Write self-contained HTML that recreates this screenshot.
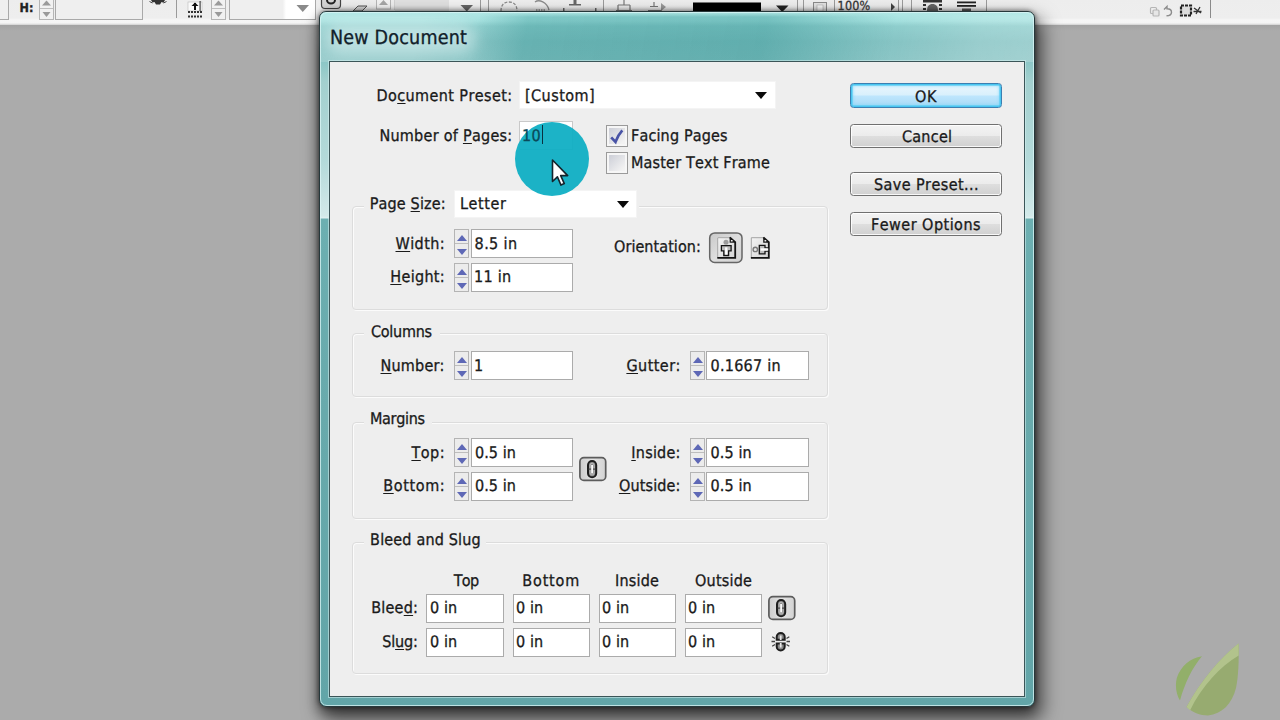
<!DOCTYPE html>
<html lang="en">
<head>
<meta charset="utf-8">
<title>New Document</title>
<style>
html,body{margin:0;padding:0}
body{width:1280px;height:720px;overflow:hidden;position:relative;background:#ababab;font-family:"DejaVu Sans Condensed","DejaVu Sans","Liberation Sans",sans-serif;font-stretch:condensed}
.a{position:absolute;box-sizing:border-box}
.t{position:absolute;white-space:pre;font-stretch:condensed;font-kerning:none;text-rendering:geometricPrecision;-webkit-text-stroke:.3px currentColor}
.t.top{z-index:5}
.t u{text-decoration:underline;text-underline-offset:2px;text-decoration-thickness:1px}
/* toolbar */
#tb{left:0;top:0;width:1280px;height:25px;background:linear-gradient(#ededed 0,#eeeeee 18px,#f6f6f6 20px,#f4f4f4 23px,#d0d0d0 25px)}
#tbsh{left:0;top:25px;width:1280px;height:6px;background:linear-gradient(#a2a2a2,#ababab)}
.tf{border:1px solid #a9a9a9;border-top:0;background:#efefef}
.tsp{border:1px solid #b5b5b5;border-top:0;background:#f1f1f1}
.vsep{width:1px;background:#9a9a9a}
/* dialog */
#shadow{left:319px;top:11px;width:716px;height:696px;border-radius:8px;box-shadow:5px 10px 18px 3px rgba(0,0,0,.55),-2px 6px 12px 0 rgba(0,0,0,.3),0 0 4px 1px rgba(0,0,0,.4)}
#frame{left:319px;top:11px;width:716px;height:696px;border-radius:7px;border:1px solid #26383b;overflow:hidden;
 background:linear-gradient(#b2e8e6 0,#a4e0de 9px,#8fcecd 14px,#86c4c4 30px,#8cc6c6 50px,#a3d0cf 70px,#b4dada 150px,#d2e9e9 204px,#dff0f0 206px,#6cafb1 207px,#68aaac 400px,#62a5a8 696px)}
#glass{left:0;top:0;width:714px;height:50px;background:linear-gradient(100deg,rgba(255,255,255,.14) 0,rgba(255,255,255,.14) 14%,rgba(255,255,255,0) 22%,rgba(30,135,135,.30) 29%,rgba(30,135,135,.36) 62%,rgba(255,255,255,.0) 80%,rgba(255,255,255,.16) 92%,rgba(255,255,255,.2) 100%);-webkit-mask-image:linear-gradient(transparent 0,#000 5px);mask-image:linear-gradient(transparent 0,#000 5px)}
#hl{left:0;top:0;width:714px;height:694px;border-radius:7px;border:1px solid rgba(220,245,245,.75)}
#client{left:329px;top:61px;width:696px;height:636px;background:#eeeeee;border:1px solid #3b5558;box-shadow:0 0 0 1px rgba(215,240,240,.55)}
#titleglow{left:326px;top:24px;width:150px;height:30px;border-radius:15px;background:rgba(225,245,245,.5);filter:blur(7px)}
/* group boxes */
.gb{border:1px solid #dcdcdc;border-radius:4px;box-shadow:1px 1px 0 #fbfbfb, inset 1px 1px 0 #fbfbfb}
.gl{background:#eeeeee;height:4px}
/* fields */
.f{background:#fff;border:1px solid #ababab}
.dd{background:#fff;border:1px solid #f4f4f4}
.sp{border:1px solid #b4b4b4;background:#ececec}
.sp:before{content:"";position:absolute;left:0;right:0;top:50%;height:1px;background:#bdbdbd;margin-top:-.5px}
.sp i{position:absolute;left:50%;margin-left:-5px;width:0;height:0;border-left:5px solid transparent;border-right:5px solid transparent}
.sp i.u{top:4.5px;border-bottom:6px solid #5e68b6}
.sp i.d{bottom:2.5px;border-top:6px solid #5e68b6}
.arr{width:0;height:0;border-left:6.5px solid transparent;border-right:6.5px solid transparent;border-top:7px solid #0a0a0a}
/* buttons */
.btn{border:1px solid #707070;border-radius:3.5px;background:linear-gradient(#f3f3f3 0,#ececec 48%,#dedede 52%,#d0d0d0 100%);box-shadow:inset 0 0 0 1px rgba(255,255,255,.85)}
.btn.def{border-color:#3c7fb1;background:linear-gradient(#eaf6fd 0,#d9f0fc 48%,#bee6fd 52%,#a7d9f5 100%);box-shadow:inset 0 0 0 1.5px #48c6f0,inset 0 0 3px 2px rgba(120,215,250,.8)}
.cb{border:1.500px solid #9a9a9a;background:linear-gradient(135deg,#cfd1d9 15%,#f2f2f2 80%);box-shadow:inset 0 0 0 2px #f6f6f6}
.ib{border:1px solid #555;border-radius:5px;background:linear-gradient(#d9d9d9,#c6c6c6);box-shadow:inset 0 0 0 1px #efefef}
</style>
</head>
<body>
<!-- top control strip -->
<div class="a" id="tb"></div>
<div class="a" id="tbsh"></div>
<div class="a tf" style="left:-2px;top:0;width:11px;height:20px"></div>
<div class="a tsp" style="left:39px;top:0;width:15px;height:20px"></div>
<div class="a" style="left:40px;top:8px;width:13px;height:1px;background:#bdbdbd"></div>
<div class="a tf" style="left:55px;top:0;width:88px;height:20px"></div>
<div class="a vsep" style="left:176px;top:0;height:18px"></div>
<div class="a tsp" style="left:211px;top:0;width:15px;height:20px"></div>
<div class="a" style="left:212px;top:8px;width:13px;height:1px;background:#bdbdbd"></div>
<div class="a tf" style="left:229px;top:0;width:87px;height:20px;background:linear-gradient(90deg,#efefef 0,#efefef 62%,#fff 66%)"></div>
<svg class="a" style="left:0;top:0" width="1280" height="26" viewBox="0 0 1280 26">
 <g fill="#9a9a9a">
  <path d="M42 5.5h9l-4.5-5z"/><path d="M42.5 12h8l-4 5z"/>
  <path d="M214 5.5h9l-4.5-5z"/><path d="M214.500 12h8l-4 5z"/>
  <path d="M296.500 5h12.500l-6.250 7z" fill="#8a8a8a"/>
 </g>
 <!-- small glyph icons -->
 <path d="M151 0l1.500 2.500 2-.5 1.500 2.500h4l1.500-2.500 2 .8 1.500-2.800z" fill="#333"/><path d="M149.500 1.500l3 1.500M166.500 1.500l-3 1.500" stroke="#444" stroke-width="1"/>
 <g fill="#111"><rect x="188" y="2" width="14" height="9" fill="#fafafa" stroke="#bbb" stroke-width=".6"/><rect x="194" y="3" width="2" height="7"/><path d="M191.500 6l3.500-3.500 3.500 3.500z"/><rect x="199.500" y="1" width="1.200" height="10" fill="#444"/>
  <g fill="#333"><rect x="188" y="11" width="2" height="2"/><rect x="191" y="11" width="2" height="2"/><rect x="194" y="11" width="2" height="2"/><rect x="197" y="11" width="2" height="2"/><rect x="200" y="11" width="2" height="2"/>
  <rect x="188" y="15.500" width="2" height="2"/><rect x="191" y="15.500" width="2" height="2"/><rect x="194" y="15.500" width="2" height="2"/><rect x="197" y="15.500" width="2" height="2"/><rect x="200" y="15.500" width="2" height="2"/></g></g>
 <!-- strip behind dialog top -->
 <rect x="321.500" y="-4" width="19" height="12.500" rx="3.500" fill="#d4d4d4" stroke="#444" stroke-width="1.200"/>
 <path d="M327 0a4 3.500 0 0 0 8 0" fill="none" stroke="#222" stroke-width="2"/>
 <path d="M353 11l5-5h9l-5 5z" fill="#d8d8d8" stroke="#555" stroke-width="1"/>
 <rect x="376.500" y="-2" width="14" height="11" fill="#f1f1f1" stroke="#b5b5b5"/><path d="M379 5h9l-4.500-5z" fill="#a5a5a5"/>
 <rect x="394.500" y="-2" width="1" height="12" fill="#b5b5b5"/>
 <rect x="395" y="0" width="54" height="11" fill="#e0e0e0"/><rect x="449" y="0" width="31" height="11" fill="#f1f1f1"/><path d="M460.500 5h12.500l-6.250 6.500z" fill="#666"/>
 <rect x="480" y="0" width="1" height="11" fill="#9a9a9a"/><rect x="488" y="0" width="1" height="11" fill="#9a9a9a"/>
 <g fill="none" stroke="#8a8a8a" stroke-width="1.300"><path d="M501 11c0-6 3-9 8-9s8 3 8 9" stroke-dasharray="3 1.500"/><path d="M535 2c4-3 12 0 14 8"/><path d="M536 10h9" stroke-dasharray="1.500 1"/></g>
 <g fill="#666"><rect x="573.500" y="0" width="3" height="4.500"/><rect x="569" y="4" width="12" height="1.500"/><rect x="563" y="8" width="1.500" height="3"/><rect x="595" y="8" width="1.500" height="3"/></g>
 <rect x="603" y="0" width="1" height="11" fill="#9a9a9a"/>
 <g fill="none" stroke="#777" stroke-width="1.200"><path d="M624 0v5M618 5h12M618 5v6M630 5v6M616 10.500h16"/><path d="M654 2v4M650 6.500h8M648 10.500h14"/></g>
 <path d="M661 3l5 4-5 4z" fill="#999"/>
 <rect x="693" y="2.500" width="68" height="9" fill="#000"/>
 <path d="M776 5.500h12.500l-6.250 6.500z" fill="#222"/>
 <rect x="797" y="0" width="1" height="11" fill="#9a9a9a"/><rect x="803" y="0" width="1" height="11" fill="#9a9a9a"/>
 <rect x="813.500" y="2.500" width="13" height="10" fill="#e2e2e2" stroke="#8a8a8a"/><rect x="817" y="5" width="6" height="6" fill="#f8f8f8" stroke="#aaa" stroke-width=".6"/>
 <rect x="834" y="0" width="1" height="11" fill="#9a9a9a"/>
 <path d="M891 3l4 4-4 4z" fill="#444"/>
 <rect x="898" y="0" width="1" height="11" fill="#9a9a9a"/><rect x="902" y="0" width="1" height="11" fill="#9a9a9a"/><rect x="911" y="0" width="1" height="11" fill="#9a9a9a"/>
 <g fill="#333"><rect x="923" y="0" width="19" height="2.500"/><rect x="923" y="4" width="3" height="2"/><rect x="939" y="4" width="3" height="2"/><rect x="923" y="8" width="3" height="2"/><rect x="939" y="8" width="3" height="2"/><path d="M927 11c0-5 2-7 5.500-7s5.500 2 5.500 7z" fill="#666"/></g>
 <g fill="#222"><rect x="957" y="1.500" width="19" height="1.800"/><rect x="957" y="5" width="19" height="1.800"/><rect x="962" y="8.500" width="9" height="3" fill="#555"/></g>
 <rect x="986" y="0" width="1" height="11" fill="#9a9a9a"/>
 <!-- right side small icons -->
 <g fill="none" stroke="#b5b5b5" stroke-width="1.200"><rect x="1150.500" y="7.500" width="6" height="6" rx="1"/><rect x="1153" y="10" width="6" height="6" rx="1" fill="#e6e6e6"/></g>
 <path d="M1164 9.500l3-3v2.200c3 0 4.500 1.500 4.500 3.500s-2 3.500-5 3.500" fill="none" stroke="#8c8c8c" stroke-width="1.400"/>
 <rect x="1181" y="5.500" width="10" height="10" fill="#dcdcdc" stroke="#222" stroke-width="2.200" stroke-dasharray="3 1"/>
 <path d="M1194 8l7 5M1200 7l-4 7M1193.500 11.500h8" stroke="#333" stroke-width="1.300" fill="none"/>
 <rect x="1210" y="0" width="1" height="18" fill="#8a8a8a"/>
</svg>

<!-- dialog -->
<div class="a" id="shadow"></div>
<div class="a" id="frame"><div class="a" id="glass"></div><div class="a" id="hl"></div></div>
<div class="a" id="titleglow"></div>
<div class="a" id="client"></div>

<!-- group boxes -->
<div class="a gb" style="left:352px;top:206px;width:475.500px;height:103.500px"></div>
<div class="a gl" style="left:364px;top:204px;width:275px"></div>
<div class="a gb" style="left:352px;top:332.500px;width:475.500px;height:64.500px"></div>
<div class="a gl" style="left:364px;top:330.500px;width:76px"></div>
<div class="a gb" style="left:352px;top:421.500px;width:475.500px;height:97px"></div>
<div class="a gl" style="left:364px;top:419.500px;width:68px"></div>
<div class="a gb" style="left:352px;top:542px;width:475.500px;height:131.500px"></div>
<div class="a gl" style="left:364px;top:540px;width:122px"></div>

<!-- dropdowns -->
<div class="a dd" style="left:519px;top:81px;width:257px;height:28px"></div>
<div class="a arr" style="left:755px;top:92px"></div>
<div class="a dd" style="left:454px;top:190px;width:183px;height:28px"></div>
<div class="a arr" style="left:616.500px;top:200.500px"></div>

<!-- pages field -->
<div class="a f" style="left:519px;top:121px;width:54px;height:29px;border-color:#c9c9c9"></div>

<!-- checkboxes -->
<div class="a cb" style="left:606px;top:125.300px;width:22px;height:21.500px"></div>
<svg class="a" style="left:606px;top:125.300px" width="22" height="22" viewBox="0 0 22 22"><path d="M5.200 12.400l4.300 4.500c1.600-4.800 3.700-8.200 6.800-11.600" fill="none" stroke="#4853a6" stroke-width="2.700" stroke-linejoin="miter"/></svg>
<div class="a cb" style="left:606px;top:152.300px;width:22px;height:21.500px"></div>

<!-- spinner+field rows -->
<div class="a sp" style="left:454px;top:229px;width:15px;height:29px"><i class="u"></i><i class="d"></i></div>
<div class="a f" style="left:470.5px;top:229px;width:102.0px;height:29px"></div>
<div class="a sp" style="left:454px;top:263px;width:15px;height:29px"><i class="u"></i><i class="d"></i></div>
<div class="a f" style="left:470.5px;top:263px;width:102.0px;height:29px"></div>
<div class="a sp" style="left:454px;top:351px;width:15px;height:29px"><i class="u"></i><i class="d"></i></div>
<div class="a f" style="left:470.5px;top:351px;width:102.0px;height:29px"></div>
<div class="a sp" style="left:454px;top:438px;width:15px;height:29px"><i class="u"></i><i class="d"></i></div>
<div class="a f" style="left:470.5px;top:438px;width:102.0px;height:29px"></div>
<div class="a sp" style="left:454px;top:472px;width:15px;height:29px"><i class="u"></i><i class="d"></i></div>
<div class="a f" style="left:470.5px;top:472px;width:102.0px;height:29px"></div>
<div class="a sp" style="left:690px;top:351px;width:15px;height:29px"><i class="u"></i><i class="d"></i></div>
<div class="a f" style="left:706px;top:351px;width:102.5px;height:29px"></div>
<div class="a sp" style="left:690px;top:438px;width:15px;height:29px"><i class="u"></i><i class="d"></i></div>
<div class="a f" style="left:706px;top:438px;width:102.5px;height:29px"></div>
<div class="a sp" style="left:690px;top:472px;width:15px;height:29px"><i class="u"></i><i class="d"></i></div>
<div class="a f" style="left:706px;top:472px;width:102.5px;height:29px"></div>
<div class="a f" style="left:426px;top:593.5px;width:77.5px;height:29px"></div>
<div class="a f" style="left:512.5px;top:593.5px;width:77.0px;height:29px"></div>
<div class="a f" style="left:598.5px;top:593.5px;width:77.0px;height:29px"></div>
<div class="a f" style="left:684.5px;top:593.5px;width:77.5px;height:29px"></div>
<div class="a f" style="left:426px;top:627.5px;width:77.5px;height:29px"></div>
<div class="a f" style="left:512.5px;top:627.5px;width:77.0px;height:29px"></div>
<div class="a f" style="left:598.5px;top:627.5px;width:77.0px;height:29px"></div>
<div class="a f" style="left:684.5px;top:627.5px;width:77.5px;height:29px"></div>

<!-- orientation -->
<svg class="a" style="left:700px;top:225px" width="80" height="45" viewBox="0 0 80 45">
 <defs><linearGradient id="gb1" x1="0" y1="0" x2="1" y2="1"><stop offset="0" stop-color="#c9c9c9"/><stop offset=".5" stop-color="#dedede"/><stop offset="1" stop-color="#d2d2d2"/></linearGradient>
 <linearGradient id="pg" x1="0" y1="0" x2="1" y2="1"><stop offset="0" stop-color="#f4f4f4"/><stop offset="1" stop-color="#d2d2d2"/></linearGradient></defs>
 <rect x="9.700" y="7.900" width="32.300" height="29.600" rx="5" fill="url(#gb1)" stroke="#666" stroke-width="1.500"/>
 <g id="pgicon">
  <path d="M17.200 12.200H30L36 17V33.750H17.200z" fill="url(#pg)"/>
  <path d="M17.700 33V12.700H30" fill="none" stroke="#a4a4a4" stroke-width="1"/>
  <path d="M29.800 12.300L35.200 17.200V32.900H17.300" fill="none" stroke="#141414" stroke-width="1.800"/>
  <path d="M29.600 12.300L35.800 17.800H29.600z" fill="#1c1c1c"/>
  <rect x="30.900" y="15" width="1.700" height="1.500" fill="#f0f0f0"/>
 </g>
 <circle cx="26" cy="17.300" r="2.500" fill="#9c9c9c"/>
 <path d="M21.400 20.700H31.100V25.800H28.600V30.500H23.800V25.800H21.400z" fill="#bdbdbd" stroke="#151515" stroke-width="1.300"/>
 <rect x="25.100" y="22.300" width="2.300" height="7.300" fill="#fff"/>
 <use href="#pgicon" x="33.600"/>
 <circle cx="55.300" cy="24.400" r="2.200" fill="#e6e6e6" stroke="#7a7a7a" stroke-width="1.400"/>
 <path d="M59.300 20.400H65V22.800H68V26.200H65V28.800H59.300z" fill="#bdbdbd" stroke="#151515" stroke-width="1.300"/>
 <rect x="60.600" y="23.300" width="7.600" height="2.400" fill="#fff"/>
</svg>

<!-- chain buttons -->
<svg class="a" style="left:570px;top:450px" width="46" height="40" viewBox="0 0 46 40">
 <defs><linearGradient id="gb2" x1="0" y1="0" x2="1" y2="0"><stop offset="0" stop-color="#cdcdcd"/><stop offset=".5" stop-color="#e4e4e4"/><stop offset="1" stop-color="#d2d2d2"/></linearGradient></defs>
 <g id="chainbtn">
  <rect x="9.900" y="7.700" width="25.800" height="22.700" rx="4" fill="url(#gb2)" stroke="#5c5c5c" stroke-width="1.700"/>
  <rect x="18" y="10.900" width="8.200" height="16.400" rx="4.100" fill="#8c8c8c" stroke="#1e1e1e" stroke-width="2"/>
  <rect x="20.100" y="13.200" width="4" height="11.800" rx="2" fill="none" stroke="#bdbdbd" stroke-width="1"/>
  <path d="M18 19.100h8.200" stroke="#333" stroke-width="1"/>
  <rect x="21.200" y="15" width="1.800" height="8.400" fill="#fafafa"/>
 </g>
</svg>
<svg class="a" style="left:759px;top:588.800px" width="46" height="40" viewBox="0 0 46 40"><use href="#chainbtn"/></svg>
<svg class="a" style="left:765px;top:627px" width="32" height="30" viewBox="0 0 32 30">
 <path d="M11.700 12.800V10a4 4 0 0 1 8 0v2.800z" fill="#8a8a8a" stroke="#1e1e1e" stroke-width="2"/>
 <path d="M11.700 16.400V19.400a4 4 0 0 0 8 0v-3z" fill="#8a8a8a" stroke="#1e1e1e" stroke-width="2"/>
 <rect x="14.800" y="8.500" width="1.800" height="4.500" fill="#e8e8e8"/><rect x="14.800" y="16" width="1.800" height="4.500" fill="#e8e8e8"/>
 <g stroke="#444" stroke-width="1.300"><path d="M6.500 14.500h3.500M21.500 14.500h3.500M7.200 9.800l2.800 1.700M24.300 9.800l-2.800 1.700M7.200 19.200l2.800-1.700M24.300 19.200l-2.800-1.700"/></g>
</svg>

<!-- buttons -->
<div class="a btn def" style="left:850px;top:83px;width:152px;height:25px"></div>
<div class="a btn" style="left:850px;top:124px;width:152px;height:24px"></div>
<div class="a btn" style="left:850px;top:171.500px;width:152px;height:24px"></div>
<div class="a btn" style="left:850px;top:212px;width:152px;height:24px"></div>

<!-- text -->
<span class="t " style="left:330.00px;top:25.55px;font-size:19.5px;line-height:24px;letter-spacing:0.195px;color:#10202a">New Document</span>
<span class="t " style="left:376.50px;top:85.76px;font-size:16px;line-height:20px;letter-spacing:0.413px;color:#1a1a1a">Do<u>c</u>ument Preset:</span>
<span class="t " style="left:525.00px;top:85.76px;font-size:16px;line-height:20px;letter-spacing:0.462px;color:#1a1a1a">[Custom]</span>
<span class="t " style="left:379.40px;top:125.76px;font-size:16px;line-height:20px;letter-spacing:0.271px;color:#1a1a1a">Number of <u>P</u>ages:</span>
<span class="t top" style="left:522.00px;top:125.76px;font-size:16px;line-height:20px;letter-spacing:0.344px;color:#0a4a5a">10</span>
<span class="t " style="left:631.00px;top:125.76px;font-size:16px;line-height:20px;letter-spacing:0.150px;color:#1a1a1a">Facing Pages</span>
<span class="t " style="left:631.00px;top:152.76px;font-size:16px;line-height:20px;letter-spacing:0.179px;color:#1a1a1a">Master Text Frame</span>
<span class="t " style="left:369.70px;top:193.76px;font-size:16px;line-height:20px;letter-spacing:0.164px;color:#1a1a1a">Page <u>S</u>ize:</span>
<span class="t " style="left:460.00px;top:193.76px;font-size:16px;line-height:20px;letter-spacing:0.597px;color:#1a1a1a">Letter</span>
<span class="t " style="left:395.50px;top:233.76px;font-size:16px;line-height:20px;letter-spacing:0.432px;color:#1a1a1a"><u>W</u>idth:</span>
<span class="t " style="left:474.60px;top:233.76px;font-size:16px;line-height:20px;letter-spacing:0.389px;color:#1a1a1a">8.5 in</span>
<span class="t " style="left:390.30px;top:266.76px;font-size:16px;line-height:20px;letter-spacing:0.318px;color:#1a1a1a"><u>H</u>eight:</span>
<span class="t " style="left:474.00px;top:266.76px;font-size:16px;line-height:20px;letter-spacing:0.279px;color:#1a1a1a">11 in</span>
<span class="t " style="left:614.00px;top:236.76px;font-size:16px;line-height:20px;letter-spacing:0.067px;color:#1a1a1a">Orientation:</span>
<span class="t " style="left:371.00px;top:321.76px;font-size:16px;line-height:20px;letter-spacing:-0.272px;color:#1a1a1a">Columns</span>
<span class="t " style="left:380.50px;top:355.76px;font-size:16px;line-height:20px;letter-spacing:0.212px;color:#1a1a1a"><u>N</u>umber:</span>
<span class="t " style="left:474.00px;top:355.76px;font-size:16px;line-height:20px;letter-spacing:0.000px;color:#1a1a1a">1</span>
<span class="t " style="left:626.40px;top:355.76px;font-size:16px;line-height:20px;letter-spacing:0.477px;color:#1a1a1a"><u>G</u>utter:</span>
<span class="t " style="left:710.50px;top:355.76px;font-size:16px;line-height:20px;letter-spacing:0.260px;color:#1a1a1a">0.1667 in</span>
<span class="t " style="left:370.00px;top:408.76px;font-size:16px;line-height:20px;letter-spacing:-0.320px;color:#1a1a1a">Margins</span>
<span class="t " style="left:411.40px;top:442.76px;font-size:16px;line-height:20px;letter-spacing:0.555px;color:#1a1a1a"><u>T</u>op:</span>
<span class="t " style="left:475.00px;top:442.76px;font-size:16px;line-height:20px;letter-spacing:0.069px;color:#1a1a1a">0.5 in</span>
<span class="t " style="left:383.20px;top:475.76px;font-size:16px;line-height:20px;letter-spacing:0.635px;color:#1a1a1a"><u>B</u>ottom:</span>
<span class="t " style="left:475.00px;top:475.76px;font-size:16px;line-height:20px;letter-spacing:0.069px;color:#1a1a1a">0.5 in</span>
<span class="t " style="left:631.30px;top:442.76px;font-size:16px;line-height:20px;letter-spacing:0.239px;color:#1a1a1a"><u>I</u>nside:</span>
<span class="t " style="left:710.50px;top:442.76px;font-size:16px;line-height:20px;letter-spacing:0.129px;color:#1a1a1a">0.5 in</span>
<span class="t " style="left:618.90px;top:475.76px;font-size:16px;line-height:20px;letter-spacing:0.158px;color:#1a1a1a"><u>O</u>utside:</span>
<span class="t " style="left:710.50px;top:475.76px;font-size:16px;line-height:20px;letter-spacing:0.129px;color:#1a1a1a">0.5 in</span>
<span class="t " style="left:370.10px;top:529.76px;font-size:16px;line-height:20px;letter-spacing:0.167px;color:#1a1a1a">Bleed and Slug</span>
<span class="t " style="left:453.70px;top:570.76px;font-size:16px;line-height:20px;letter-spacing:-0.697px;color:#1a1a1a">Top</span>
<span class="t " style="left:522.30px;top:570.76px;font-size:16px;line-height:20px;letter-spacing:0.827px;color:#1a1a1a">Bottom</span>
<span class="t " style="left:615.00px;top:570.76px;font-size:16px;line-height:20px;letter-spacing:0.198px;color:#1a1a1a">Inside</span>
<span class="t " style="left:695.00px;top:570.76px;font-size:16px;line-height:20px;letter-spacing:0.211px;color:#1a1a1a">Outside</span>
<span class="t " style="left:371.20px;top:597.76px;font-size:16px;line-height:20px;letter-spacing:0.233px;color:#1a1a1a">Blee<u>d</u>:</span>
<span class="t " style="left:382.20px;top:631.76px;font-size:16px;line-height:20px;letter-spacing:-0.127px;color:#1a1a1a">Sl<u>u</u>g:</span>
<span class="t " style="left:430.00px;top:597.76px;font-size:16px;line-height:20px;letter-spacing:0.091px;color:#1a1a1a">0 in</span>
<span class="t " style="left:516.00px;top:597.76px;font-size:16px;line-height:20px;letter-spacing:0.091px;color:#1a1a1a">0 in</span>
<span class="t " style="left:602.00px;top:597.76px;font-size:16px;line-height:20px;letter-spacing:0.091px;color:#1a1a1a">0 in</span>
<span class="t " style="left:688.00px;top:597.76px;font-size:16px;line-height:20px;letter-spacing:0.091px;color:#1a1a1a">0 in</span>
<span class="t " style="left:430.00px;top:631.76px;font-size:16px;line-height:20px;letter-spacing:0.091px;color:#1a1a1a">0 in</span>
<span class="t " style="left:516.00px;top:631.76px;font-size:16px;line-height:20px;letter-spacing:0.091px;color:#1a1a1a">0 in</span>
<span class="t " style="left:602.00px;top:631.76px;font-size:16px;line-height:20px;letter-spacing:0.091px;color:#1a1a1a">0 in</span>
<span class="t " style="left:688.00px;top:631.76px;font-size:16px;line-height:20px;letter-spacing:0.091px;color:#1a1a1a">0 in</span>
<span class="t " style="left:915.00px;top:86.76px;font-size:16px;line-height:20px;letter-spacing:0.672px;color:#1a1a1a">OK</span>
<span class="t " style="left:902.00px;top:126.76px;font-size:16px;line-height:20px;letter-spacing:0.245px;color:#1a1a1a">Cancel</span>
<span class="t " style="left:874.00px;top:174.76px;font-size:16px;line-height:20px;letter-spacing:0.423px;color:#1a1a1a">Save Preset...</span>
<span class="t " style="left:871.00px;top:214.76px;font-size:16px;line-height:20px;letter-spacing:0.475px;color:#1a1a1a">Fewer Options</span>
<span class="t " style="left:19.60px;top:-0.02px;font-size:12.5px;line-height:16px;letter-spacing:-0.012px;color:#222;font-weight:700">H:</span>
<span class="t " style="left:837.60px;top:-2.02px;font-size:12.5px;line-height:16px;letter-spacing:0.180px;color:#333">100%</span>

<!-- caret -->
<div class="a" style="left:541.800px;top:125px;width:1.300px;height:19px;background:#0a3040;z-index:5"></div>

<!-- click highlight + cursor -->
<div class="a" style="left:515px;top:122px;width:74px;height:74px;border-radius:50%;background:rgba(14,174,196,.94);z-index:3"></div>
<svg class="a" style="left:548px;top:156px;z-index:6" width="26" height="34" viewBox="0 0 26 34"><path d="M4.500 4v21.500l4.900-4.700 3.600 8.300 3.300-1.500-3.600-8h7z" fill="#fff" stroke="#14242c" stroke-width="1.600" stroke-linejoin="round"/></svg>

<!-- watermark leaf -->
<svg class="a" style="left:1170px;top:640px" width="80" height="80" viewBox="0 0 80 80"><g opacity=".82">
 <path d="M32 16.300c-12 2.200-21 9.500-25.200 21.700-2 8-.5 16.500 3.200 22.600 4.800-17.500 12-32.500 22-44.300z" fill="#8db05c"/>
 <path d="M68.600 3.500C50 18 30 42 16.500 67c5.500 5 13.500 8.500 21.500 8.500 14-1.500 24-11.500 28-27.500 2.500-12 3-28 2.600-44.500z" fill="#93ac64"/>
 <path d="M68.600 3.500C50 18 30 42 16.500 67l3.600 3.200C32 46 50 26.500 68.700 15.500z" fill="#b4c986"/>
</g></svg>
</body>
</html>
